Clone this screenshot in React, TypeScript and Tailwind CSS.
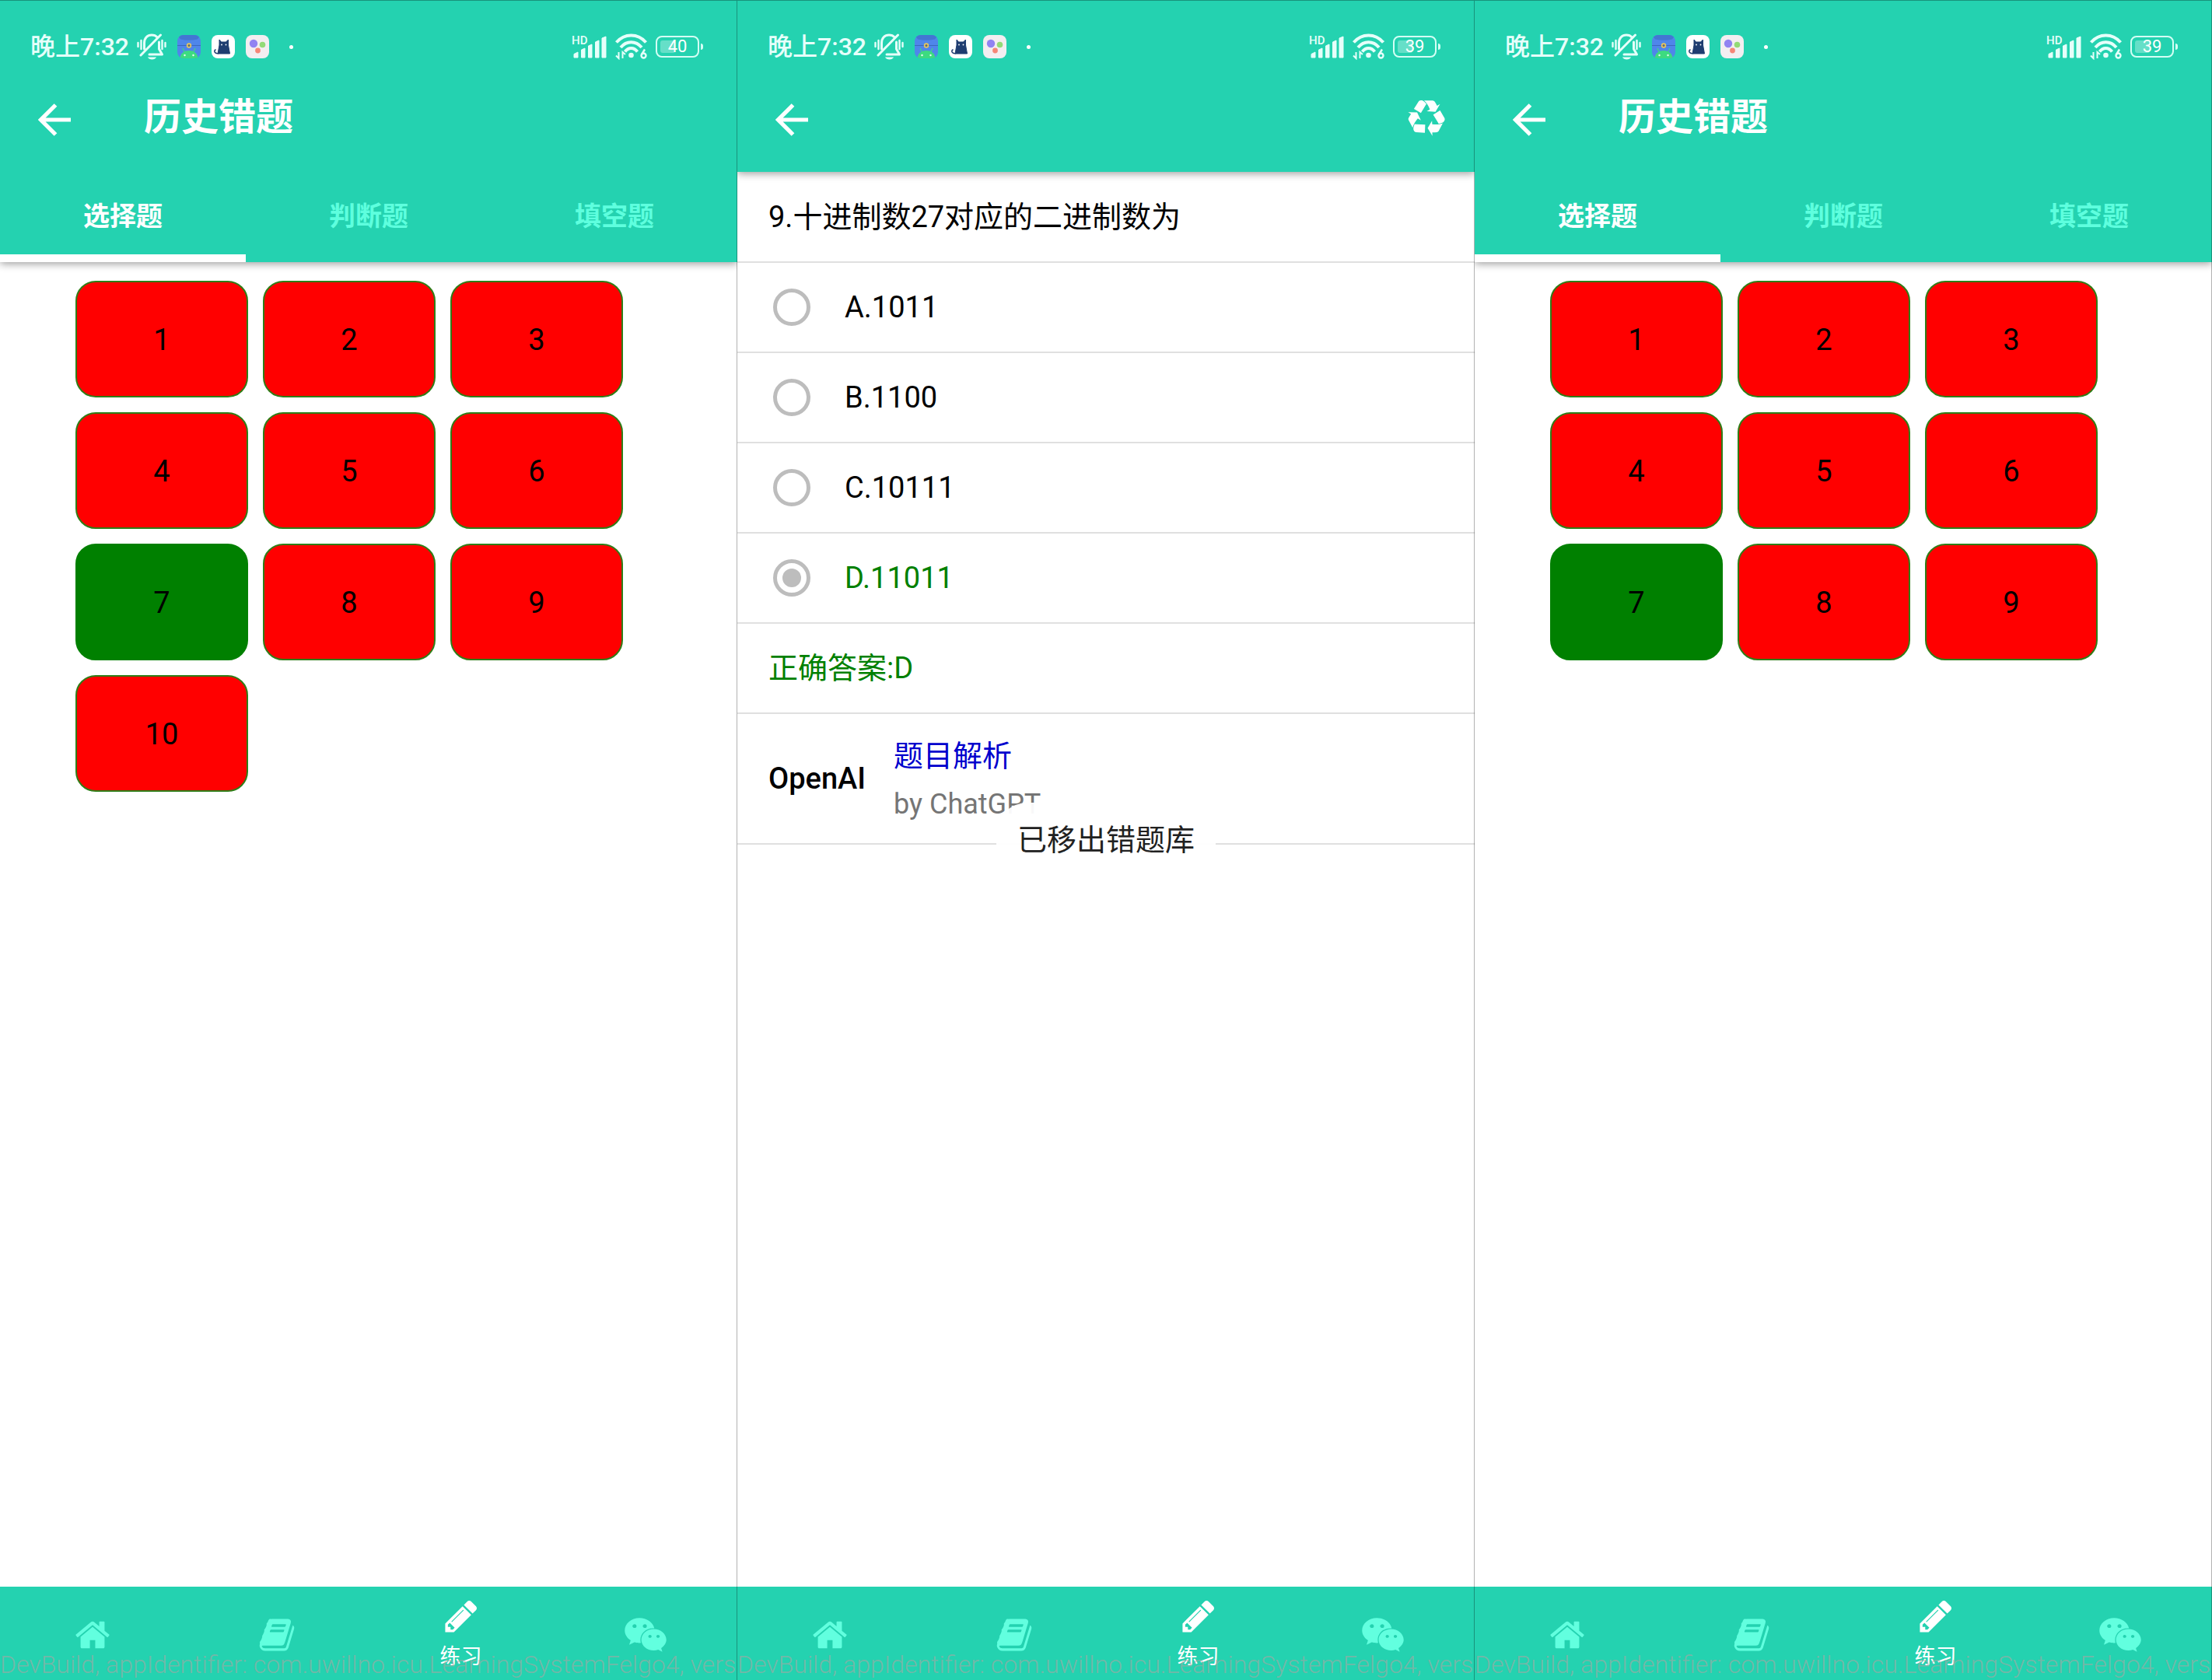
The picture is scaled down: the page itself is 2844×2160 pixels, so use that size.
import { FaWeixin } from "react-icons/fa";
import type { ReactNode } from "react";

const ICONS = {
  home: "M1472 992v480q0 26-19 45t-45 19h-384v-384h-256v384h-384q-26 0-45-19t-19-45v-480q0-1 .5-3t.5-3l575-474 575 474q1 2 1 6zm223-69l-62 74q-8 9-21 11h-3q-13 0-21-7l-692-577-692 577q-12 8-24 7-13-2-21-11l-62-74q-8-10-7-23.5t11-21.5l719-599q32-26 76-26t76 26l244 204v-195q0-14 9-23t23-9h192q14 0 23 9t9 23v408l219 182q10 8 11 21.5t-7 23.5z",
  book: "M1703 478q40 57 18 129l-275 906q-19 64-76.5 107.5t-122.5 43.5h-923q-77 0-148.5-53.5t-99.5-131.5q-24-67-2-127 0-4 3-27t4-37q1-8-3-21.5t-3-19.5q2-11 8-21t16.5-23.5 16.5-23.5q23-38 45-91.5t30-91.5q3-10 .5-30t-.5-28q3-11 17-28t17-23q21-36 42-92t25-90q1-9-2.5-32t.5-28q4-13 22-30.5t22-22.5q19-26 42.5-84.5t27.5-96.5q1-8-3-25.5t-2-26.5q2-8 9-18t18-23 17-21q8-12 16.5-30.5t15-35 16-36 19.5-32 26.5-23.5 36-11.5 47.5 5.5l-1 3q38-9 51-9h761q74 0 114 56t18 130l-274 906q-36 119-71.5 153.5t-128.5 34.5h-869q-27 0-38 15-11 16-1 43 24 70 144 70h923q29 0 56-15.5t35-41.5l300-987q7-22 5-57 38 15 59 43zm-1064 2q-4 13 2 22.5t20 9.5h608q13 0 25.5-9.5t16.5-22.5l21-64q4-13-2-22.5t-20-9.5h-608q-13 0-25.5 9.5t-16.5 22.5zm-83 256q-4 13 2 22.5t20 9.5h608q13 0 25.5-9.5t16.5-22.5l21-64q4-13-2-22.5t-20-9.5h-608q-13 0-25.5 9.5t-16.5 22.5z",
  pencil: "M491 1536l91-91-235-235-91 91v107h128v128h107zm523-928q0-22-22-22-10 0-17 7l-542 542q-7 7-7 17 0 22 22 22 10 0 17-7l542-542q7-7 7-17zm-54-192l416 416-832 832h-416v-416zm683 96q0 53-37 90l-166 166-416-416 166-165q36-38 90-38 53 0 91 38l235 234q37 39 37 91z",
  recycle: "M836 1169l-15 368-2 22-420-29q-36-3-67-31.5t-47-65.5q-11-27-14.5-55t4-65 12-55 21.5-64 19-53q78 12 509 28zm-387-586l180 379-147-92q-63 72-111.5 144.5t-72.5 125-39.5 94.5-18.5 63l-4 21-190-357q-17-26-18-56t6-47l8-18q35-63 114-188l-140-86zm1231 517l-188 359q-12 29-36.5 46.5t-43.5 20.5l-18 4q-71 7-219 12l8 164-230-367 211-362 7 173q170 16 283 5t170-33zm-785-924q-47 63-265 435l-317-187-19-12 225-356q20-31 60-45t80-10q24 2 48.5 12t42 21 41.5 33 36 34.5 36 39.5 32 35zm655 307l212 363q18 37 12.5 76t-27.5 74q-13 20-33 37t-38 28-48.5 22-47 16-51.5 14-46 12q-34-72-265-436l313-195zm-143-226l142-83-220 373-419-20 151-86q-34-89-75-166t-75.5-123.5-64.5-80-47-46.5l-17-13 405 1q31-3 58 10.5t39 28.5l11 15q39 61 112 190z",
};

function Glyph({ name }: { name: keyof typeof ICONS }) {
  return (
    <svg viewBox="0 0 1792 1792" className="size-12" fill="currentColor" aria-hidden="true">
      <path d={ICONS[name]} />
    </svg>
  );
}

function MutedBell() {
  return (
    <svg viewBox="0 0 38 34" className="h-[34px] w-[38px]" fill="none" stroke="currentColor" strokeWidth="3" strokeLinecap="round" aria-hidden="true">
      <path d="M1.500 12v5M5.500 9v11M32.500 9v11M36.500 12v5" strokeWidth="2.400" />
      <path d="M9.500 20V12.500C9.500 6 13.500 2 19 2c3 0 5.500 1 7 2.800" />
      <path d="M28.500 11V20l4 7H16" strokeLinejoin="round" />
      <path d="M30.500 2L5 28" />
      <path d="M14 30.500h11c-1.500 4-9.500 4-11 0z" fill="currentColor" stroke="none" />
    </svg>
  );
}

function AppBadges() {
  return (
    <>
      <svg viewBox="0 0 30 30" className="size-[30px]" aria-hidden="true">
        <clipPath id="badge"><rect width="30" height="30" rx="8" /></clipPath>
        <g clipPath="url(#badge)">
          <rect width="30" height="30" fill="#4f86ea" />
          <path d="M0 0h30l-4 5.500q-11 2.500-22 0z" fill="#4376d3" />
          <path d="M0 13.500h30" stroke="#3c69bd" strokeWidth="1.200" />
          <path d="M3.500 30C4 23 9 20 15 20s11 3 11.500 10z" fill="#3ddb80" />
          <path d="M9 21.500l-2-4.500M21 21.500l2-4.500" stroke="#3ddb80" strokeWidth="1.200" />
          <circle cx="15" cy="13.500" r="3.200" fill="#e8c65c" />
          <circle cx="15" cy="13.500" r="1.500" fill="#5b6a82" />
          <circle cx="9.500" cy="26" r="1.200" fill="#e9fff2" />
          <circle cx="20.500" cy="26" r="1.200" fill="#e9fff2" />
        </g>
      </svg>
      <svg viewBox="0 0 30 30" className="size-[30px]" aria-hidden="true">
        <rect width="30" height="30" rx="8" fill="#fff" />
        <path d="M8 24L10 13V6l2.500 3H18.500l3-3V13L23.500 24z" fill="#1f3d70" stroke="#1f3d70" strokeLinejoin="round" />
        <path d="M9 23.500c-5 1-6.500-3-4-4.500" fill="none" stroke="#1f3d70" strokeWidth="1.500" strokeLinecap="round" />
        <circle cx="13" cy="12.500" r="0.900" fill="#fff" />
        <circle cx="18.500" cy="12.500" r="0.900" fill="#fff" />
      </svg>
      <svg viewBox="0 0 30 30" className="size-[30px]" aria-hidden="true">
        <rect width="30" height="30" rx="8" fill="#f3eef1" />
        <circle cx="10" cy="11" r="5.200" fill="#9183f2" />
        <circle cx="21.500" cy="12.500" r="3.800" fill="#93da77" />
        <circle cx="15.500" cy="20" r="3.400" fill="#f68677" />
      </svg>
    </>
  );
}

function Signal() {
  return (
    <svg viewBox="0 0 46 32" className="h-8 w-[46px]" fill="currentColor" aria-hidden="true">
      <text x="0" y="13" fontSize="15" fontWeight="500" fontFamily="Roboto, sans-serif">HD</text>
      <path d="M3 30v-4.500l5-2.500v7zM12.500 30V20l4.500-2v12zM21.500 30V15l4.500-2v17zM30.500 30V10l4.500-2v22zM39 30V5l5-2v27z" stroke="currentColor" strokeWidth="1" strokeLinejoin="round" />
    </svg>
  );
}

function Wifi() {
  return (
    <svg viewBox="0 0 42 34" className="h-[34px] w-[42px]" fill="none" stroke="currentColor" strokeWidth="4" aria-hidden="true">
      <path d="M1.500 11.500C12 -.5 29 -.5 39.500 11.500" />
      <path d="M7 18C14.500 9 26.500 9 34 18" />
      <path d="M12.500 23.500C17 17.500 24 17.500 28.500 23.500" />
      <circle cx="20.500" cy="28" r="3.300" fill="currentColor" stroke="none" />
      <path d="M4.500 24v8L1 28.500M9.500 32v-8l3.500 3" strokeWidth="2" />
      <circle cx="36.500" cy="28.500" r="3" strokeWidth="2.400" />
      <path d="M34 27L38 20.500" strokeWidth="2.400" />
    </svg>
  );
}

function Battery({ level }: { level: number }) {
  return (
    <div className="flex items-center gap-0.5">
      <div className="relative flex h-7 w-[56px] items-center justify-center rounded-[8px] border-2 border-[#d4fff5]">
        <div className="absolute inset-y-1 left-1 w-[19px] rounded-[3px] bg-white/30" />
        <span className="relative text-[22px] leading-6 text-white">{level}</span>
      </div>
      <div className="h-2 w-[3px] rounded-r bg-[#d4fff5]" />
    </div>
  );
}

function StatusBar({ level }: { level: number }) {
  return (
    <div className="flex h-[119px] items-start justify-between pt-10 pr-11 pl-[39px] text-[#e6fffa]">
      <div className="flex h-10 items-center">
        <span className="text-[32px] leading-10 font-medium">晚上7:32</span>
        <div className="mr-3.5 ml-2.5 flex"><MutedBell /></div>
        <div className="flex gap-3.5"><AppBadges /></div>
        <div className="ml-[26px] size-[5px] rounded-full bg-white" />
      </div>
      <div className="flex h-10 items-center gap-2.5">
        <Signal />
        <Wifi />
        <Battery level={level} />
      </div>
    </div>
  );
}

function BackButton() {
  return (
    <button type="button" aria-label="返回" className="flex size-[42px] items-center justify-center">
      <svg viewBox="0 0 42 42" className="size-full" fill="none" stroke="currentColor" strokeWidth="5.200" aria-hidden="true">
        <path d="M42 21H5M22.500 2L3.500 21l19 19" />
      </svg>
    </button>
  );
}

const TABS = ["选择题", "判断题", "填空题"];

function HistoryHeader({ level }: { level: number }) {
  return (
    <header className="relative z-10 bg-[#24d2b0] text-white shadow-[0_2px_10px_rgba(0,0,0,0.4)]">
      <StatusBar level={level} />
      <div className="flex h-[102px] items-start gap-[94px] pl-[49px]">
        <div className="pt-3.5"><BackButton /></div>
        <h1 className="text-[48px] leading-[64px] font-bold">历史错题</h1>
      </div>
      <div role="tablist" className="grid h-[116px] grid-cols-3">
        {TABS.map((tab, i) => (
          <button
            key={tab}
            type="button"
            role="tab"
            aria-selected={i === 0}
            className={
              i === 0
                ? "border-b-[10px] border-white pt-2 text-[34px] leading-10 font-bold"
                : "border-b-[10px] border-transparent pt-2 text-[34px] leading-10 font-bold text-[#5effde]"
            }
          >
            {tab}
          </button>
        ))}
      </div>
    </header>
  );
}

function NavBar() {
  const item = "flex flex-col items-center justify-center pt-1 text-[#62ffdf]";
  return (
    <nav className="relative grid h-[120px] shrink-0 grid-cols-4 overflow-hidden bg-[#24d2b0]">
      <a href="#home" aria-label="首页" className={item}><Glyph name="home" /></a>
      <a href="#book" aria-label="课程" className={item}><Glyph name="book" /></a>
      <a href="#practice" className="flex flex-col items-center gap-2.5 pt-3.5 text-white">
        <Glyph name="pencil" />
        <span className="text-[27px] leading-9">练习</span>
      </a>
      <a href="#social" aria-label="社区" className={item}><FaWeixin className="size-14" /></a>
      <p className="pointer-events-none absolute bottom-0 left-0 text-[32px] leading-10 font-light whitespace-nowrap text-[#b8a0a0]/55">
        DevBuild, appIdentifier: com.uwillno.icu.LearningSystemFelgo4, vers
      </p>
    </nav>
  );
}

function Phone({ children }: { children: ReactNode }) {
  return (
    <section className="relative flex min-w-0 flex-1 flex-col overflow-hidden bg-white">
      {children}
      <NavBar />
      <div className="pointer-events-none absolute inset-0 z-20 border-t border-r border-black/30" />
    </section>
  );
}

function HistoryScreen({ level, count }: { level: number; count: number }) {
  return (
    <Phone>
      <HistoryHeader level={level} />
      <main className="flex-1 px-[97px] pt-6">
        <div className="flex flex-wrap gap-[19px]">
          {Array.from({ length: count }, (_, i) => i + 1).map((n) => (
            <button
              key={n}
              type="button"
              className={
                n === 7
                  ? "h-[150px] w-[222px] rounded-[26px] border-2 border-[#008000] bg-[#008000] pt-0.5 text-[38px] text-black"
                  : "h-[150px] w-[222px] rounded-[26px] border-2 border-[#2f7d17] bg-[#ff0000] pt-0.5 text-[38px] text-black"
              }
            >
              {n}
            </button>
          ))}
        </div>
      </main>
    </Phone>
  );
}

const OPTIONS = ["A.1011", "B.1100", "C.10111", "D.11011"];

function QuestionScreen() {
  return (
    <Phone>
      <header className="relative z-10 bg-[#24d2b0] text-white shadow-[0_2px_10px_rgba(0,0,0,0.4)]">
        <StatusBar level={39} />
        <div className="flex h-[102px] items-start justify-between pr-[38px] pl-[49px]">
          <div className="pt-3.5"><BackButton /></div>
          <button type="button" aria-label="移出错题库" className="pt-2.5"><Glyph name="recycle" /></button>
        </div>
      </header>
      <main className="flex-1 pt-px text-[38px] leading-[48px] text-black">
        <h2 className="flex h-[116px] items-center border-b-2 border-[#e0e0e0] px-10">9.十进制数27对应的二进制数为</h2>
        <fieldset>
          {OPTIONS.map((text, i) => (
            <label
              key={text}
              className={
                i === 3
                  ? "flex h-[116px] items-center gap-11 border-b-2 border-[#e0e0e0] px-[46px] text-[#008000]"
                  : "flex h-[116px] items-center gap-11 border-b-2 border-[#e0e0e0] px-[46px]"
              }
            >
              <input
                type="radio"
                name="answer"
                defaultChecked={i === 3}
                className="size-12 appearance-none rounded-full border-[5px] border-[#bdbdbd] bg-white bg-clip-content p-[7px] checked:bg-[#bdbdbd]"
              />
              {text}
            </label>
          ))}
        </fieldset>
        <p className="flex h-[116px] items-center border-b-2 border-[#e0e0e0] px-10 text-[#008000]">正确答案:D</p>
        <div className="relative flex h-[168px] items-center gap-9 border-b-2 border-[#e0e0e0] px-10">
          <strong className="font-medium">OpenAI</strong>
          <div className="flex flex-col gap-3.5 pt-1">
            <a href="#analysis" className="text-[#0000cd]">题目解析</a>
            <span className="text-[36px] text-[#757575]">by ChatGPT</span>
          </div>
          <div role="status" className="absolute top-full left-1/2 -translate-x-1/2 -translate-y-[52px] rounded-[40px] bg-white/95 px-[27px] py-6 text-[#212121]">
            已移出错题库
          </div>
        </div>
      </main>
    </Phone>
  );
}

export default function App() {
  return (
    <div lang="zh-CN" className="flex min-h-screen bg-white font-[Roboto,'Noto_Sans_CJK_SC',sans-serif]">
      <HistoryScreen level={40} count={10} />
      <QuestionScreen />
      <HistoryScreen level={39} count={9} />
    </div>
  );
}
